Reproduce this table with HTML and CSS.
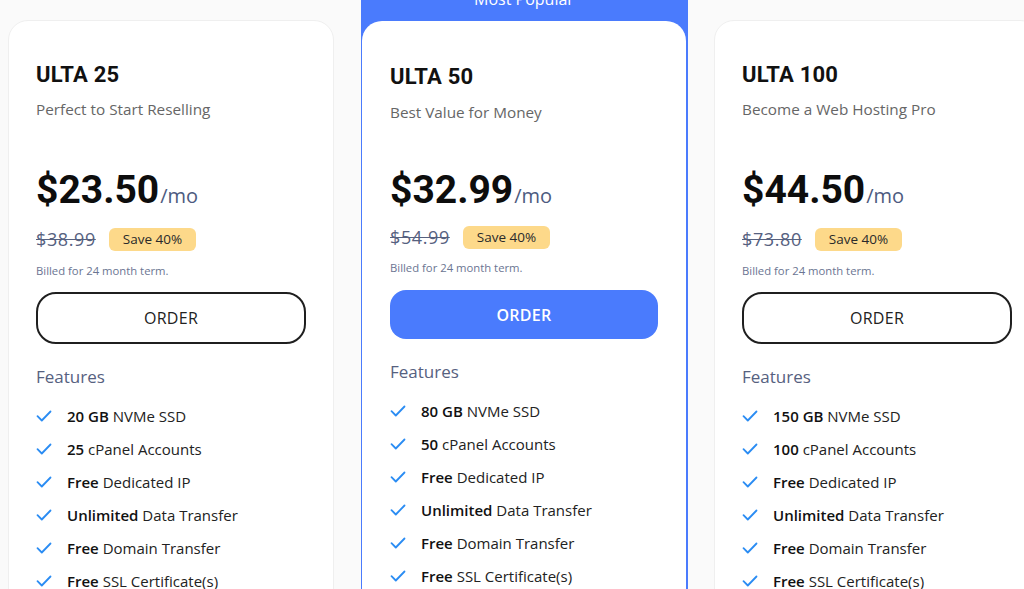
FILE: index.html
```html
<!DOCTYPE html>
<html lang="en">
<head>
<meta charset="utf-8">
<title>Pricing</title>
<link rel="stylesheet" href="styles.css">
</head>
<body>
<div class="plans">
  <div class="card">
    <h2 class="title">ULTA 25</h2>
    <p class="sub">Perfect to Start Reselling</p>
    <div class="price">$23.50<span class="per">/mo</span></div>
    <div class="old-row"><span class="old">$38.99</span><span class="badge">Save 40%</span></div>
    <p class="billed">Billed for 24 month term.</p>
    <button class="order">ORDER</button>
    <h3 class="feat-title">Features</h3>
    <ul class="feats">
      <li><svg class="chk" viewBox="0 0 16 14"><path d="M1.5 7.2 L5.8 11.5 L14.5 2.5"/></svg><span><b>20 GB</b> NVMe SSD</span></li>
      <li><svg class="chk" viewBox="0 0 16 14"><path d="M1.5 7.2 L5.8 11.5 L14.5 2.5"/></svg><span><b>25</b> cPanel Accounts</span></li>
      <li><svg class="chk" viewBox="0 0 16 14"><path d="M1.5 7.2 L5.8 11.5 L14.5 2.5"/></svg><span><b>Free</b> Dedicated IP</span></li>
      <li><svg class="chk" viewBox="0 0 16 14"><path d="M1.5 7.2 L5.8 11.5 L14.5 2.5"/></svg><span><b>Unlimited</b> Data Transfer</span></li>
      <li><svg class="chk" viewBox="0 0 16 14"><path d="M1.5 7.2 L5.8 11.5 L14.5 2.5"/></svg><span><b>Free</b> Domain Transfer</span></li>
      <li><svg class="chk" viewBox="0 0 16 14"><path d="M1.5 7.2 L5.8 11.5 L14.5 2.5"/></svg><span><b>Free</b> SSL Certificate(s)</span></li>
    </ul>
  </div>

  <div class="popular">
    <div class="pop-label">Most Popular</div>
    <div class="card card-pop">
      <h2 class="title">ULTA 50</h2>
      <p class="sub">Best Value for Money</p>
      <div class="price">$32.99<span class="per">/mo</span></div>
      <div class="old-row"><span class="old">$54.99</span><span class="badge">Save 40%</span></div>
      <p class="billed">Billed for 24 month term.</p>
      <button class="order order-blue">ORDER</button>
      <h3 class="feat-title">Features</h3>
      <ul class="feats">
        <li><svg class="chk" viewBox="0 0 16 14"><path d="M1.5 7.2 L5.8 11.5 L14.5 2.5"/></svg><span><b>80 GB</b> NVMe SSD</span></li>
        <li><svg class="chk" viewBox="0 0 16 14"><path d="M1.5 7.2 L5.8 11.5 L14.5 2.5"/></svg><span><b>50</b> cPanel Accounts</span></li>
        <li><svg class="chk" viewBox="0 0 16 14"><path d="M1.5 7.2 L5.8 11.5 L14.5 2.5"/></svg><span><b>Free</b> Dedicated IP</span></li>
        <li><svg class="chk" viewBox="0 0 16 14"><path d="M1.5 7.2 L5.8 11.5 L14.5 2.5"/></svg><span><b>Unlimited</b> Data Transfer</span></li>
        <li><svg class="chk" viewBox="0 0 16 14"><path d="M1.5 7.2 L5.8 11.5 L14.5 2.5"/></svg><span><b>Free</b> Domain Transfer</span></li>
        <li><svg class="chk" viewBox="0 0 16 14"><path d="M1.5 7.2 L5.8 11.5 L14.5 2.5"/></svg><span><b>Free</b> SSL Certificate(s)</span></li>
      </ul>
    </div>
  </div>

  <div class="card">
    <h2 class="title">ULTA 100</h2>
    <p class="sub">Become a Web Hosting Pro</p>
    <div class="price">$44.50<span class="per">/mo</span></div>
    <div class="old-row"><span class="old">$73.80</span><span class="badge">Save 40%</span></div>
    <p class="billed">Billed for 24 month term.</p>
    <button class="order">ORDER</button>
    <h3 class="feat-title">Features</h3>
    <ul class="feats">
      <li><svg class="chk" viewBox="0 0 16 14"><path d="M1.5 7.2 L5.8 11.5 L14.5 2.5"/></svg><span><b>150 GB</b> NVMe SSD</span></li>
      <li><svg class="chk" viewBox="0 0 16 14"><path d="M1.5 7.2 L5.8 11.5 L14.5 2.5"/></svg><span><b>100</b> cPanel Accounts</span></li>
      <li><svg class="chk" viewBox="0 0 16 14"><path d="M1.5 7.2 L5.8 11.5 L14.5 2.5"/></svg><span><b>Free</b> Dedicated IP</span></li>
      <li><svg class="chk" viewBox="0 0 16 14"><path d="M1.5 7.2 L5.8 11.5 L14.5 2.5"/></svg><span><b>Unlimited</b> Data Transfer</span></li>
      <li><svg class="chk" viewBox="0 0 16 14"><path d="M1.5 7.2 L5.8 11.5 L14.5 2.5"/></svg><span><b>Free</b> Domain Transfer</span></li>
      <li><svg class="chk" viewBox="0 0 16 14"><path d="M1.5 7.2 L5.8 11.5 L14.5 2.5"/></svg><span><b>Free</b> SSL Certificate(s)</span></li>
    </ul>
  </div>
</div>
</body>
</html>
```

FILE: styles.css
```css
* { box-sizing: border-box; }
html, body { margin: 0; padding: 0; }
body {
  background: #fafafa;
  font-family: "Open Sans", "Noto Sans", sans-serif;
  color: #222;
  overflow: hidden;
  height: 589px;
}
.plans {
  display: flex;
  align-items: flex-start;
  gap: 26px;
  padding: 20px 0 0 8px;
  width: 1100px;
}
.card {
  flex: 0 0 326px;
  width: 326px;
  background: #fff;
  border: 1px solid #efefef;
  border-radius: 20px;
  padding: 39px 27px 40px;
  display: flex;
  flex-direction: column;
}
.popular {
  flex: 0 0 327px;
  width: 327px;
  margin-top: -41px;
  margin-left: 1px;
  background: #4a7bfd;
  border-radius: 0 0 20px 20px;
  padding: 0 2px 2px 1px;
  display: flex;
  flex-direction: column;
}
.pop-label {
  height: 42px;
  line-height: 40px;
  text-align: center;
  color: #fff;
  font-size: 16px;
  font-weight: 500;
}
.card-pop {
  width: 324px;
  flex: none;
  border: none;
  border-radius: 20px;
  padding: 41px 28px 40px;
}
.title {
  margin: 1px 0 0;
  font-family: Roboto, sans-serif;
  font-weight: 700;
  font-size: 22px;
  line-height: 28px;
  color: #111;
  letter-spacing: 0.2px;
}
.sub {
  margin: 9px 0 0;
  font-size: 15.3px;
  line-height: 22px;
  color: #666;
}
.price {
  margin-top: 46px;
  height: 48px;
  font-family: Roboto, sans-serif;
  font-weight: 700;
  font-size: 39px;
  line-height: 48px;
  color: #0d0d0d;
  white-space: nowrap;
}
.per {
  font-family: "Open Sans", sans-serif;
  font-weight: 500;
  font-size: 20px;
  line-height: 1;
  color: #4d5b80;
  margin-left: 1px;
}
.old-row {
  margin-top: 13px;
  height: 24px;
  display: flex;
  align-items: center;
  gap: 13px;
}
.old {
  font-size: 18px;
  letter-spacing: 0.6px;
  color: #56617f;
  text-decoration: line-through;
}
.badge {
  background: #fdd98a;
  border-radius: 6px;
  height: 23px;
  line-height: 23px;
  padding: 0 14px;
  font-size: 13.5px;
  color: #2a2a2a;
}
.billed {
  margin: 12px 0 0;
  font-size: 11.3px;
  line-height: 16px;
  color: #6b7592;
}
.order {
  margin-top: 13px;
  height: 52px;
  width: 100%;
  background: #fff;
  border: 2px solid #1f1f1f;
  border-radius: 20px;
  font-family: "Open Sans", sans-serif;
  font-size: 16px;
  color: #222;
  letter-spacing: 0.3px;
}
.feat-title {
  margin: 21px 0 0;
  font-weight: 400;
  font-size: 17px;
  line-height: 24px;
  color: #56617f;
}
.feats {
  list-style: none;
  margin: 16px 0 0;
  padding: 0;
  display: flex;
  flex-direction: column;
  gap: 11px;
}
.feats li {
  display: flex;
  align-items: center;
  gap: 15px;
  height: 22px;
  font-size: 15px;
  color: #222;
}
.feats b { font-weight: 600; color: #111; }
.chk {
  width: 16px;
  height: 14px;
  flex: none;
  fill: none;
  stroke: #2a8cf3;
  stroke-width: 1.8;
  stroke-linecap: round;
  stroke-linejoin: round;
}
.card-pop .sub { margin-top: 10px; }
.card-pop .price { margin-top: 43px; }
.card-pop .old-row { margin-top: 11px; }
.card-pop .billed { margin-top: 11px; }
.card-pop .order { margin-top: 14px; }
.order-blue {
  height: 49px;
  background: #4a7bfd;
  border: none;
  border-radius: 16px;
  color: #fff;
  font-weight: 600;
}
```
